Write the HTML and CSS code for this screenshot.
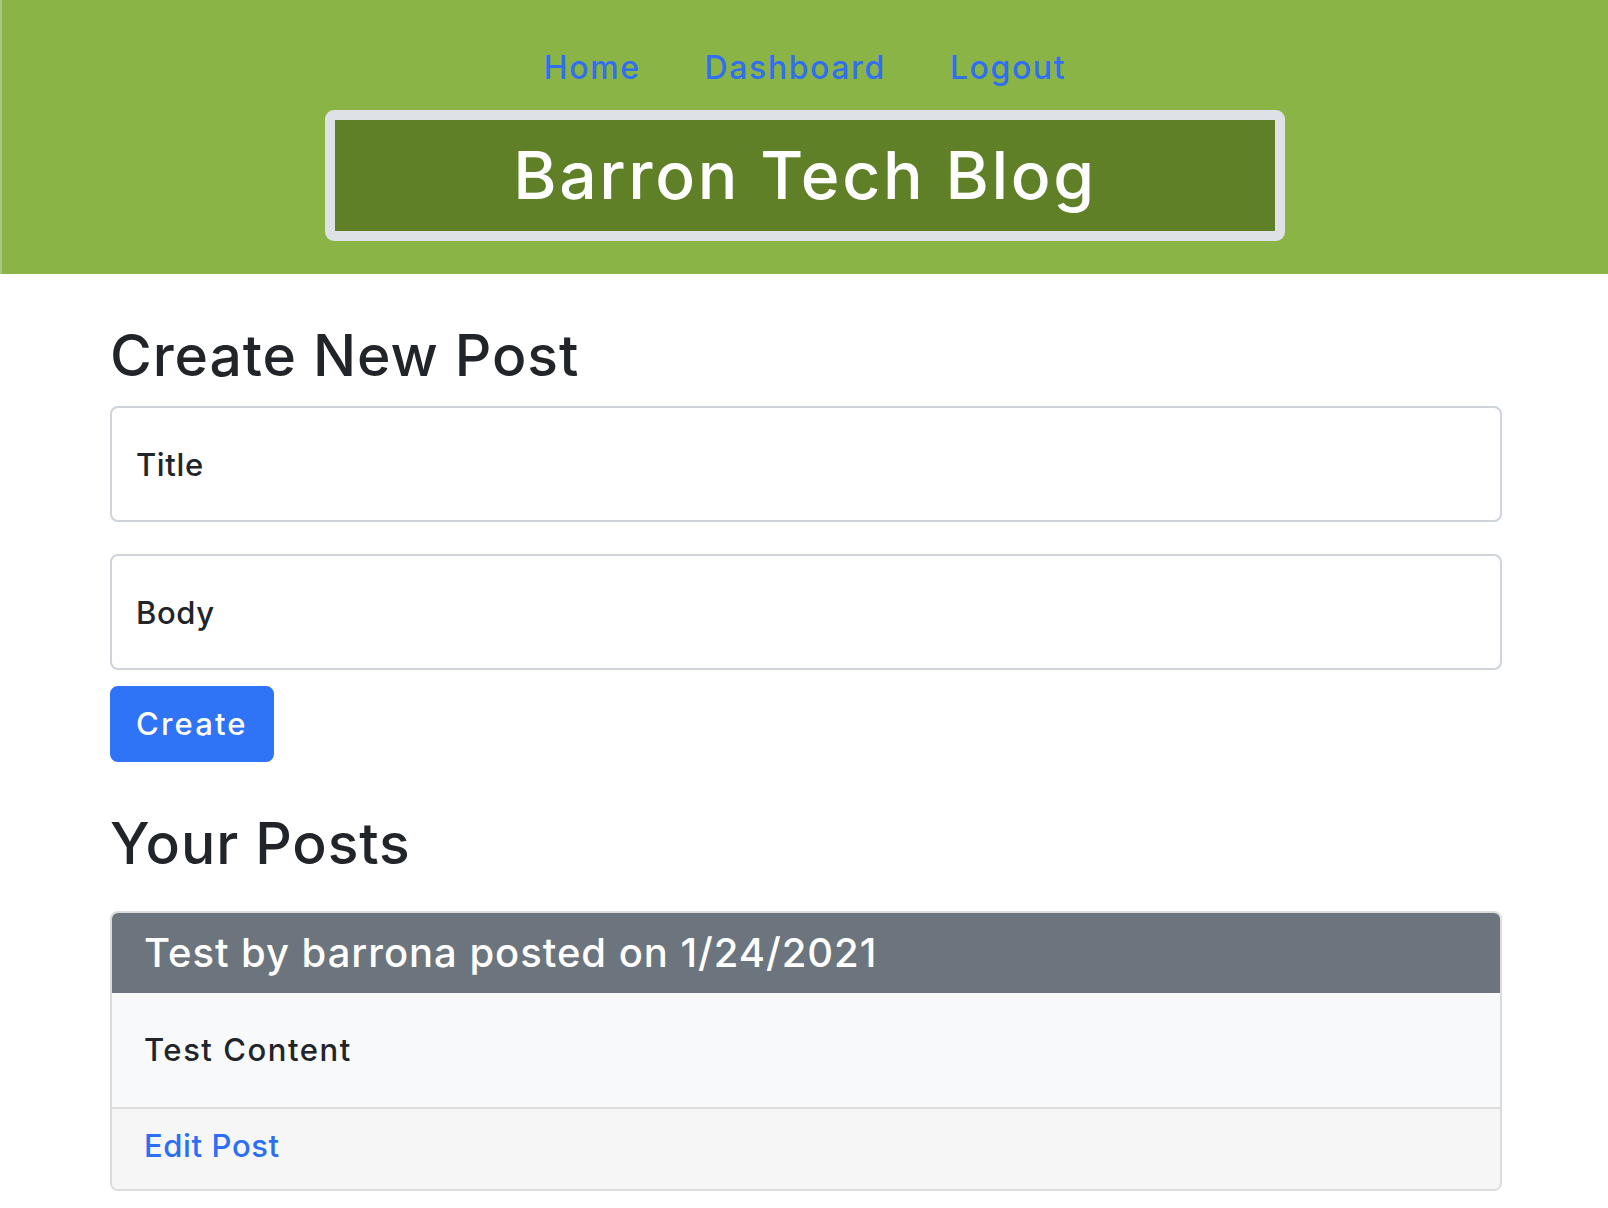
FILE: index.html
```html
<!DOCTYPE html>
<html lang="en">
<head>
<meta charset="utf-8">
<title>Barron Tech Blog - Dashboard</title>
<link rel="stylesheet" href="styles.css">
</head>
<body>
<header class="site-header">
  <nav class="nav">
    <a class="nav-link" href="#">Home</a>
    <a class="nav-link" href="#">Dashboard</a>
    <a class="nav-link" href="#">Logout</a>
  </nav>
  <h1 class="brand">Barron Tech Blog</h1>
</header>
<main class="page">
  <div class="container">
    <h2 class="section-title">Create New Post</h2>
    <form class="post-form">
      <label class="field field-title"><span>Title</span></label>
      <label class="field field-body"><span>Body</span></label>
      <button class="btn-primary" type="button">Create</button>
    </form>
    <h2 class="section-title section-posts">Your Posts</h2>
    <div class="card">
      <h5 class="card-header">Test by barrona posted on 1/24/2021</h5>
      <div class="card-body">Test Content</div>
      <div class="card-footer"><a class="card-link" href="#">Edit Post</a></div>
    </div>
  </div>
</main>
</body>
</html>
```

FILE: styles.css
```css
html, body {
  margin: 0;
  padding: 0;
}

body {
  font-family: Inter, "Noto Sans", "Liberation Sans", sans-serif;
  color: #212529;
  background: #ffffff;
}

.site-header {
  background: #8bb447;
  border-left: 2px solid #a6c67e;
  padding: 28px 0 33px;
  display: flex;
  flex-direction: column;
  align-items: center;
}

.nav {
  display: flex;
  justify-content: center;
}

.nav-link {
  font-size: 32px;
  line-height: 48px;
  padding: 16px 32px;
  color: #2f6ff0;
  text-decoration: none;
  font-weight: 500;
  letter-spacing: 0.05em;
}

.brand {
  margin: 2px 0 0;
  width: 960px;
  box-sizing: border-box;
  border: 10px solid #dee2e6;
  border-radius: 9px;
  background: #5f8027;
  color: #ffffff;
  text-align: center;
  font-size: 66px;
  font-weight: 500;
  line-height: 111px;
  letter-spacing: 0.04em;
}

.page {
  padding-left: 4px;
}

.container {
  max-width: 1392px;
  margin: 0 auto;
}

.section-title {
  font-size: 57px;
  font-weight: 500;
  line-height: 68px;
  margin: 48px 0 16px;
  color: #212529;
  letter-spacing: 0.016em;
}

.section-posts {
  margin-bottom: 33px;
}

.post-form {
  display: flex;
  flex-direction: column;
  align-items: flex-start;
  margin: 0;
}

.field {
  align-self: stretch;
  display: flex;
  align-items: center;
  height: 116px;
  box-sizing: border-box;
  border: 2px solid #ced4da;
  border-radius: 8px;
  padding: 0 24px;
  font-size: 31px;
  font-weight: 500;
  color: #212529;
  background: #ffffff;
  letter-spacing: 0.02em;
}

.field-title {
  margin-bottom: 32px;
}

.field-body {
  margin-bottom: 16px;
}

.btn-primary {
  height: 76px;
  box-sizing: border-box;
  padding: 12px 24px;
  border: 2px solid #2f73f6;
  border-radius: 8px;
  background: #2f73f6;
  color: #ffffff;
  font-family: inherit;
  font-size: 31px;
  font-weight: 500;
  line-height: 48px;
  letter-spacing: 0.07em;
  cursor: pointer;
}

.card {
  border: 2px solid #dcdcdc;
  border-radius: 8px;
  overflow: hidden;
}

.card-header {
  margin: 0;
  background: #6c757d;
  color: #ffffff;
  padding: 16px 32px;
  font-size: 40px;
  line-height: 48px;
  font-weight: 500;
  letter-spacing: 0.024em;
}

.card-body {
  background: #f8f9fa;
  padding: 33px 32px;
  font-size: 31px;
  line-height: 48px;
  font-weight: 500;
  letter-spacing: 0.05em;
}

.card-footer {
  background: #f6f6f6;
  border-top: 2px solid #dcdcdc;
  padding: 13px 32px 19px;
  font-size: 31px;
  line-height: 48px;
  font-weight: 500;
  letter-spacing: 0.02em;
}

.card-link {
  color: #2c6ff5;
  text-decoration: none;
}
```
